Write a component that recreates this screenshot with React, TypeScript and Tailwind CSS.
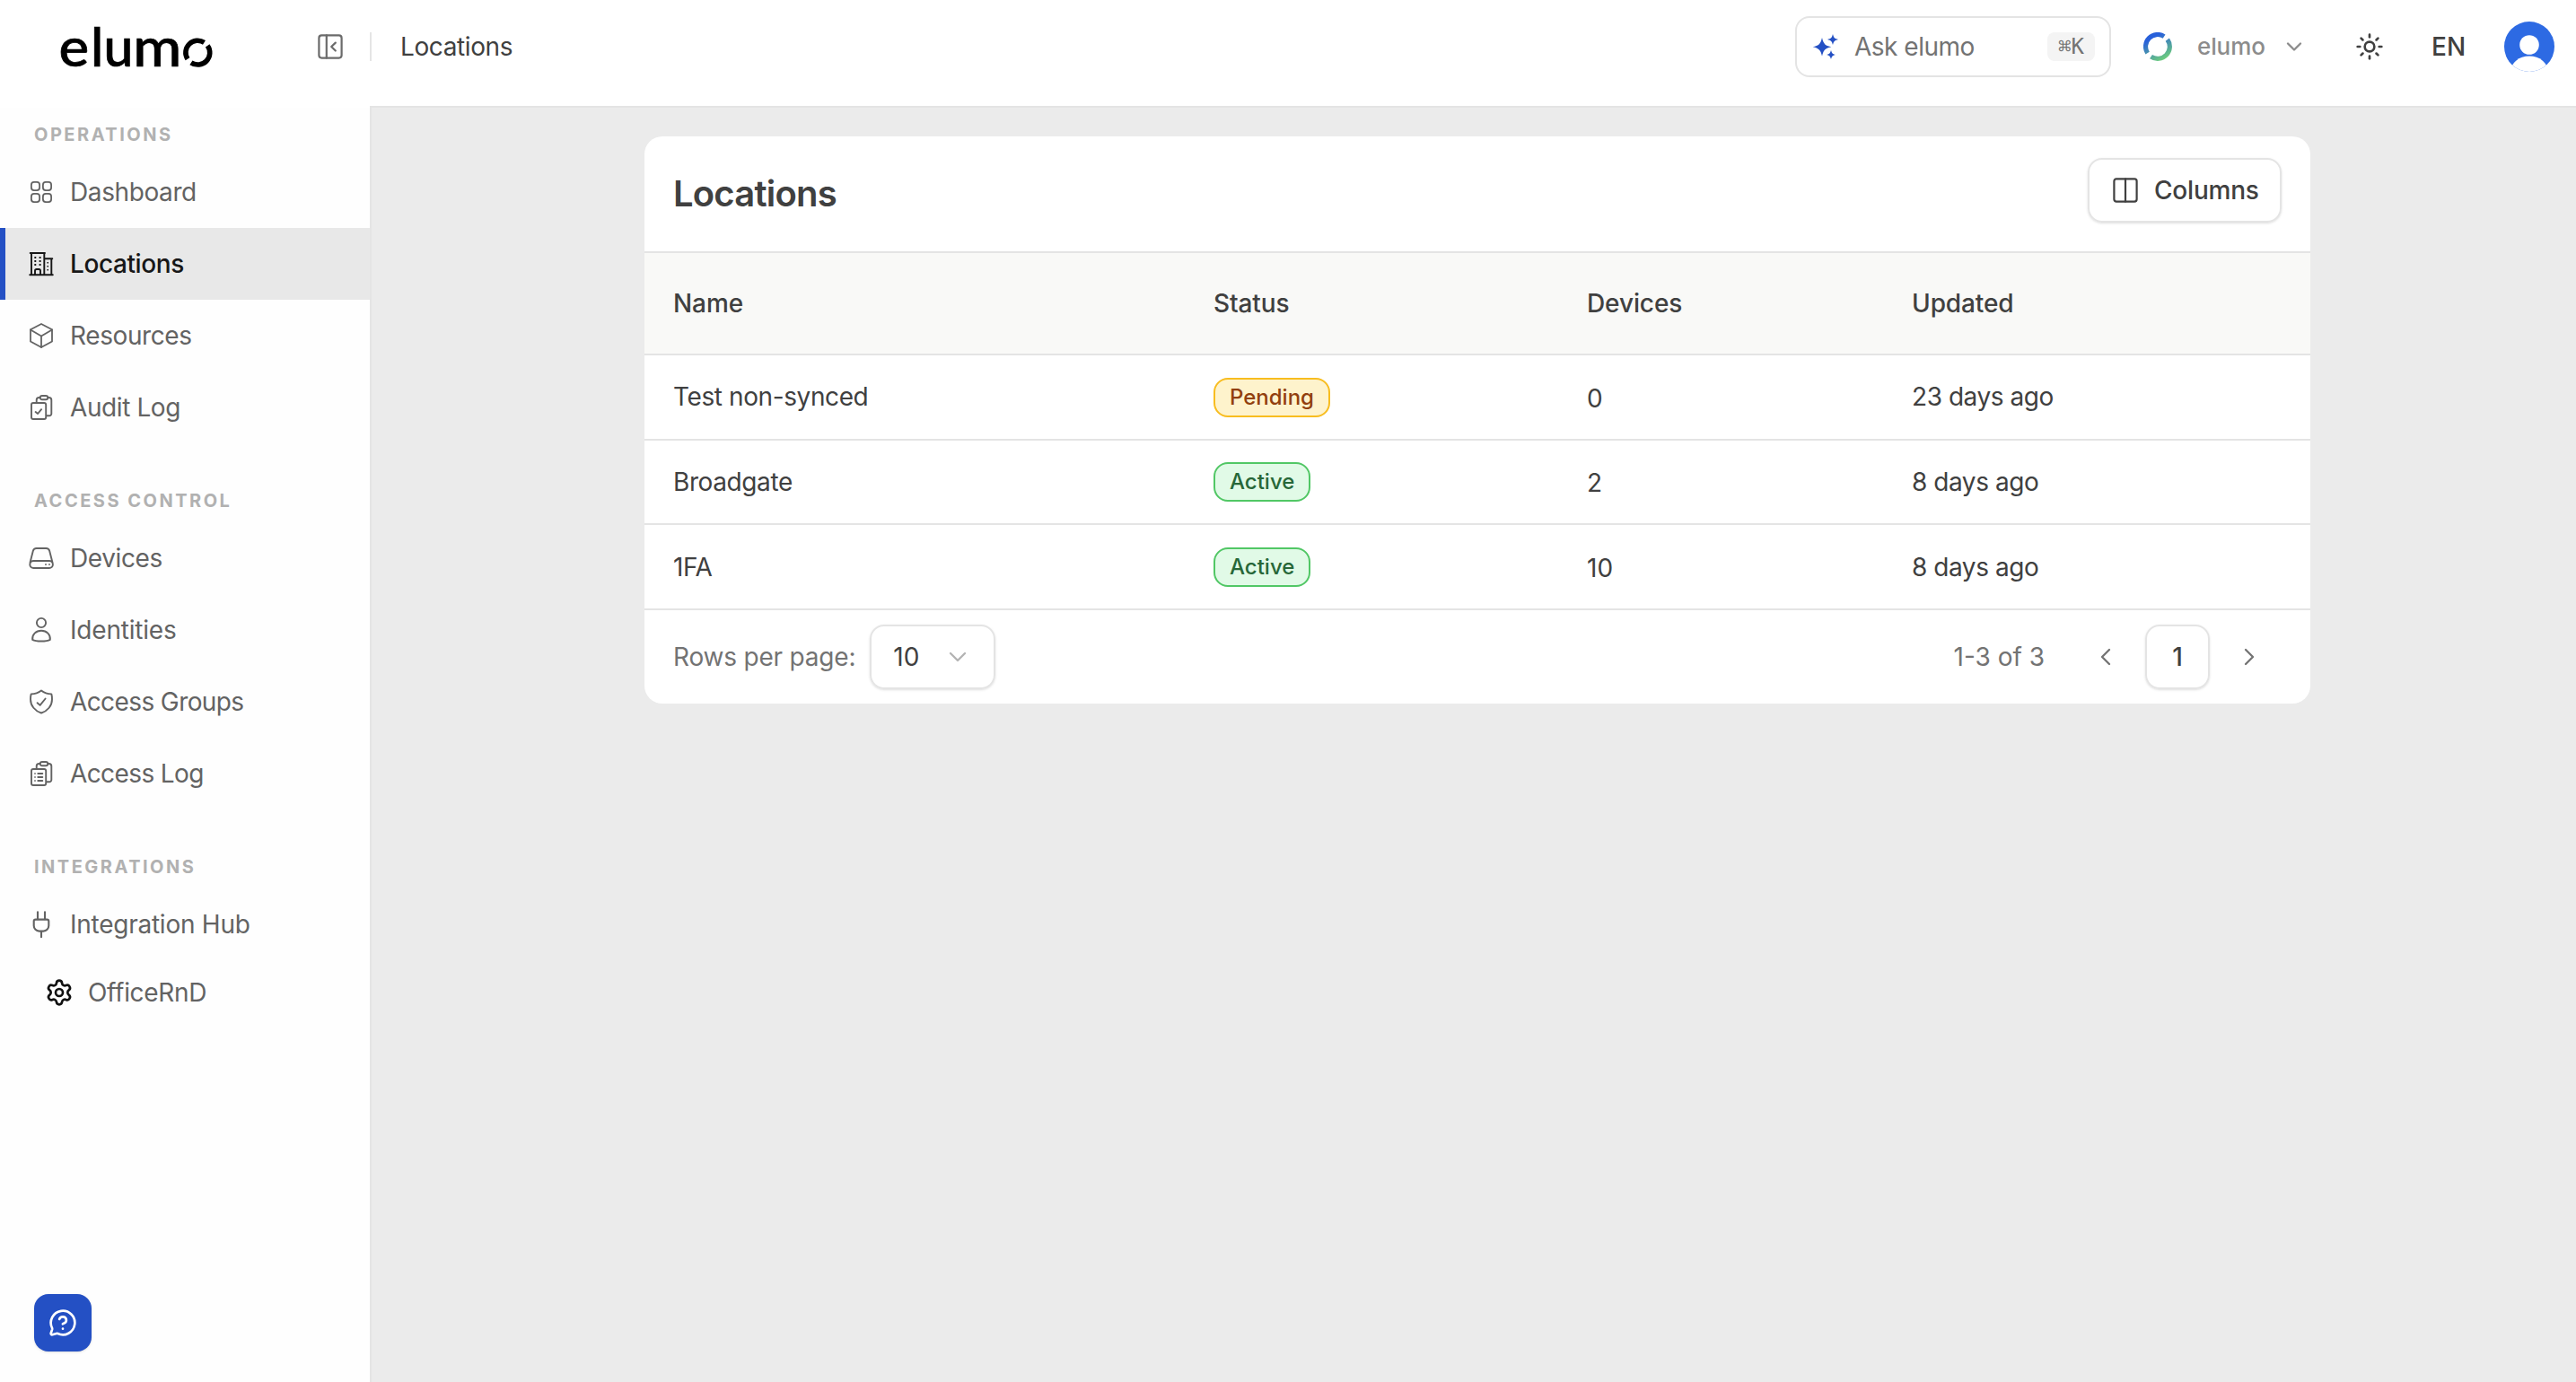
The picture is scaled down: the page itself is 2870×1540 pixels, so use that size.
import type { ReactNode } from "react";
import { ChevronDown, ChevronLeft, ChevronRight, MessageCircleQuestionMark, Settings, Sun } from "lucide-react";

type Status = "Pending" | "Active";

interface Location {
  name: string;
  status: Status;
  devices: number;
  updated: string;
}

interface NavItem {
  label: string;
  icon: ReactNode;
  active?: boolean;
  className?: string;
}

const locations: Location[] = [
  { name: "Test non-synced", status: "Pending", devices: 0, updated: "23 days ago" },
  { name: "Broadgate", status: "Active", devices: 2, updated: "8 days ago" },
  { name: "1FA", status: "Active", devices: 10, updated: "8 days ago" },
];

const statusStyles: Record<Status, string> = {
  Pending: "border-[#f8bd20] bg-[#fef3cc] text-[#92400e]",
  Active: "border-[#51c765] bg-[#e1fae7] text-[#276738]",
};

function Icon({ children, width = 2 }: { children: ReactNode; width?: number }) {
  return (
    <svg
      className="size-8 shrink-0"
      viewBox="0 0 32 32"
      fill="none"
      stroke="currentColor"
      strokeWidth={width}
      strokeLinecap="round"
      strokeLinejoin="round"
    >
      {children}
    </svg>
  );
}

const DashboardIcon = () => (
  <Icon width={1.8}>
    <rect x="4.9" y="4.9" width="9.2" height="9.2" rx="3" />
    <rect x="17.9" y="4.9" width="9.2" height="9.2" rx="3" />
    <rect x="4.9" y="17.9" width="9.2" height="9.2" rx="3" />
    <rect x="17.9" y="17.9" width="9.2" height="9.2" rx="3" />
  </Icon>
);

const BuildingIcon = () => (
  <Icon width={1.9}>
    <path d="M3.7 4H20M5 4v24M19.3 4v24M19.3 10.2h9M27.3 10.2V28M3.2 28.2h25.6" />
    <path d="M9 28v-4.2a1.8 1.8 0 0 1 1.8-1.8h2.4a1.8 1.8 0 0 1 1.8 1.8V28" />
    <path d="M9.3 9v.1M14.6 9v.1M9.3 13v.1M14.6 13v.1M9.3 17v.1M14.6 17v.1" strokeLinecap="square" />
    <path d="M23.2 14.7v.1M23.2 18.7v.1M23.2 22.7v.1" strokeWidth="1.5" strokeLinecap="square" />
  </Icon>
);

const CubeIcon = () => (
  <Icon width={1.8}>
    <path d="M16 3 28 9.3v13.2L16 29 4 22.5V9.3z" />
    <path d="m4 9.5 12 7 12-7M16 16.5V29" />
  </Icon>
);

function ClipboardIcon({ children }: { children: ReactNode }) {
  return (
    <Icon width={1.9}>
      <path d="M22 25.3h3a2.3 2.3 0 0 0 2.3-2.3V7.8A2.8 2.8 0 0 0 24.5 5h-1.3M14.8 5h-1.3a2.8 2.8 0 0 0-2.8 2.8v3" />
      <path d="M17 3h4c1.5 0 2.3 1.1 2.3 2.2S22.5 7.3 21 7.3h-4c-1.5 0-2.3-1-2.3-2.1S15.5 3 17 3z" />
      <rect x="5" y="11" width="16.2" height="18" rx="2" />
      {children}
    </Icon>
  );
}

const AuditIcon = () => (
  <ClipboardIcon>
    <path d="m9.6 21 2.5 2 4-4.8" />
  </ClipboardIcon>
);

const AccessLogIcon = () => (
  <ClipboardIcon>
    <path d="M12.3 16h5M12.3 20h5M12.3 24h5" />
    <path d="M9 16v.01M9 20v.01M9 24v.01" strokeWidth="1.6" strokeLinecap="square" />
  </ClipboardIcon>
);

const DriveIcon = () => (
  <Icon width={1.9}>
    <path d="M3.6 20.5 6.8 7.9A4 4 0 0 1 10.6 5h10.8a4 4 0 0 1 3.8 2.9l3.2 12.6" />
    <rect x="3.3" y="19" width="25.6" height="8" rx="4" />
    <path d="M21 23v.01M25 23v.01" />
  </Icon>
);

const PersonIcon = () => (
  <Icon width={1.9}>
    <circle cx="16" cy="8" r="5.1" />
    <path d="M6.2 26.8C5.6 21 10 16.8 16 16.8s10.4 4.2 9.8 10c-2 1.1-5.6 1.7-9.8 1.7s-7.8-.6-9.8-1.7z" />
  </Icon>
);

const ShieldIcon = () => (
  <Icon width={1.9}>
    <path d="M16 3.5C13 6 9 7.4 4.7 7.4 4.2 9 4 11 4 13.2 4 20.5 9 26.3 16 28.5c7-2.2 12-8 12-15.3 0-2.2-.2-4.2-.7-5.8C23 7.4 19 6 16 3.5z" />
    <path d="m11.6 17.2 3 2.7 6-7.4" />
  </Icon>
);

const PlugIcon = () => (
  <Icon width={2.1}>
    <path d="M12 2.3v8M20 2.3v8M16 24.3v6" />
    <path d="M9.7 10.6h12.6a2 2 0 0 1 2 2v5a6 6 0 0 1-6 6h-4.6a6 6 0 0 1-6-6v-5a2 2 0 0 1 2-2z" />
  </Icon>
);

const navSections: { title: string; items: NavItem[] }[] = [
  {
    title: "Operations",
    items: [
      { label: "Dashboard", icon: <DashboardIcon /> },
      { label: "Locations", icon: <BuildingIcon />, active: true },
      { label: "Resources", icon: <CubeIcon /> },
      { label: "Audit Log", icon: <AuditIcon /> },
    ],
  },
  {
    title: "Access Control",
    items: [
      { label: "Devices", icon: <DriveIcon /> },
      { label: "Identities", icon: <PersonIcon />, className: "tracking-[-0.2px]" },
      { label: "Access Groups", icon: <ShieldIcon />, className: "tracking-[-0.6px]" },
      { label: "Access Log", icon: <AccessLogIcon />, className: "tracking-[-0.6px]" },
    ],
  },
  {
    title: "Integrations",
    items: [{ label: "Integration Hub", icon: <PlugIcon />, className: "tracking-[-0.25px]" }],
  },
];

function Logo() {
  return (
    <svg className="h-20 w-[176px] overflow-visible" viewBox="0 -8 176 80" aria-label="elumo">
      <g fontFamily="Lato" fontSize="60" fontWeight="500" fill="#000" stroke="#000" strokeWidth="0.7">
        <text transform="translate(-0.6 54) scale(1.06 1)">e</text>
        <text transform="translate(35 54)">l</text>
        <text transform="translate(49.4 54) scale(0.98 1)">u</text>
        <text transform="translate(82.2 54) scale(1.09 1)">m</text>
      </g>
      <g fill="none" stroke="#000" strokeWidth="5.6">
        <path d="M143 45.8A13.4 13.4 0 0 1 161.5 27.3" />
        <path d="M165.2 30.8A13.4 13.4 0 0 1 146.9 49.8" />
      </g>
    </svg>
  );
}

function RingMark() {
  return (
    <svg className="size-8" viewBox="0 0 32 32" fill="none" stroke="url(#ring)" strokeWidth="5.2">
      <defs>
        <linearGradient id="ring" x1="8" y1="4" x2="22" y2="30" gradientUnits="userSpaceOnUse">
          <stop offset="0.1" stopColor="#2860da" />
          <stop offset="1" stopColor="#6ccb7e" />
        </linearGradient>
      </defs>
      <path d="M4.6 23.1A13.4 13.4 0 0 1 23.1 4.6" />
      <path d="M26.8 8.1A13.4 13.4 0 0 1 8.5 27.1" />
    </svg>
  );
}

function Sidebar() {
  return (
    <aside className="flex w-[414px] shrink-0 flex-col border-r-2 border-[#e4e4e4] bg-[#fefefe]">
      <nav className="flex flex-1 flex-col gap-[34px]">
        {navSections.map((section) => (
          <div key={section.title}>
            <div className="flex h-[54px] items-center pt-[6px] pl-[38px] text-xl leading-6 font-bold tracking-[2.5px] text-[#b1b1b1] uppercase">
              {section.title}
            </div>
            {section.items.map((item) => (
              <a
                key={item.label}
                className={`flex h-20 items-center gap-4 border-l-6 pl-6 ${item.className ?? "tracking-[-0.4px]"} ${
                  item.active
                    ? "border-[#2450c4] bg-[#e8e8e8] font-medium text-[#171717]"
                    : "border-transparent text-[#636363]"
                }`}
              >
                {item.icon}
                {item.label}
              </a>
            ))}
            {section.title === "Integrations" && (
              <a className="flex h-[72px] items-center gap-4 pl-[50px] tracking-[-0.3px] text-[#636363]">
                <Settings size={32} className="text-[#111]" />
                OfficeRnD
              </a>
            )}
          </div>
        ))}
      </nav>
      <button className="mb-[34px] ml-[38px] flex size-16 items-center justify-center rounded-2xl bg-[#2450c4] text-white shadow-sm">
        <MessageCircleQuestionMark size={32} />
      </button>
    </aside>
  );
}

function Header() {
  return (
    <header className="flex h-[120px] bg-white">
      <div className="flex h-[104px] w-[412px] items-center justify-between pr-7 pl-[66px] text-[#6b6b6b]">
        <Logo />
        <Icon width={2.2}>
          <rect x="3.4" y="3.4" width="25.2" height="25.2" rx="3" />
          <path d="M11.8 3.4v25.2M21.8 11.6 17.2 16l4.6 4.5" />
        </Icon>
      </div>
      <div className="flex flex-1 items-center border-b-2 border-[#e4e4e4] pb-[14px]">
        <div className="h-8 w-0.5 bg-[#e5e5e5]" />
        <span className="ml-8 tracking-[-0.4px]">Locations</span>
        <div className="ml-auto flex h-[68px] w-[352px] items-center rounded-2xl border-2 border-[#e4e4e4] px-4 text-[#737373]">
          <svg className="size-8" viewBox="0 0 32 32" fill="#2450c4">
            <path d="M12 6c1.5 6.8 3.5 8.8 10.3 10.3C15.5 17.8 13.5 19.8 12 26.6 10.5 19.8 8.5 17.8 1.7 16.3 8.5 14.8 10.5 12.8 12 6z" />
            <path d="M24 2c1 4 2 5 6 6-4 1-5 2-6 6-1-4-2-5-6-6 4-1 5-2 6-6z" />
            <path d="M22 20c.9 3.3 1.7 4.1 5 5-3.3.9-4.1 1.7-5 5-.9-3.3-1.7-4.1-5-5 3.3-.9 4.1-1.7 5-5z" />
          </svg>
          <span className="ml-4 tracking-[-0.5px]">Ask elumo</span>
          <kbd className="ml-auto flex h-8 w-[53px] items-center justify-center rounded-lg bg-[#f4f4f4] font-['DejaVu_Sans_Mono',monospace] text-2xl">
            ⌘K
          </kbd>
        </div>
        <div className="ml-9 flex items-center">
          <RingMark />
          <span className="ml-7 w-[76px] text-[26px] font-medium tracking-[-0.1px] text-[#8c8c8c]">elumo</span>
          <ChevronDown size={28} className="ml-[18px] text-[#8c8c8c]" />
        </div>
        <Sun size={32} className="ml-[54px]" />
        <span className="ml-[53px] w-10 font-medium">EN</span>
        <svg className="mr-6 ml-[41px] size-14" viewBox="0 0 56 56">
          <clipPath id="avatar">
            <circle cx="28" cy="28" r="28" />
          </clipPath>
          <g clipPath="url(#avatar)">
            <rect width="56" height="56" fill="#2d6ae3" />
            <circle cx="28" cy="26" r="10.8" fill="#fff" />
            <ellipse cx="28" cy="56" rx="21" ry="17.5" fill="#fff" />
          </g>
        </svg>
      </div>
    </header>
  );
}

const columns = "grid grid-cols-[602px_416px_362px_1fr] items-center pl-8";

function LocationsTable() {
  return (
    <section className="mx-auto mt-8 w-[1856px] overflow-hidden rounded-[20px] bg-white">
      <div className="flex h-[130px] items-start justify-between border-b-2 border-[#e4e4e4] px-8 pt-6">
        <h1 className="mt-4 text-[40px] leading-[48px] font-semibold tracking-[-0.8px]">Locations</h1>
        <button className="flex h-[72px] w-[216px] items-center gap-4 rounded-2xl border-2 border-[#e4e4e4] pl-6 font-medium tracking-[-0.2px] shadow-sm">
          <Icon width={2.2}>
            <rect x="3.4" y="3.4" width="25.2" height="25.2" rx="2.5" />
            <path d="M16 3.4v25.2" />
          </Icon>
          Columns
        </button>
      </div>

      <div className={`${columns} h-[114px] border-b-2 border-[#e4e4e4] bg-[#f9f9f7] font-medium tracking-[-0.1px]`}>
        <span>Name</span>
        <span>Status</span>
        <span>Devices</span>
        <span>Updated</span>
      </div>

      {locations.map((location) => (
        <div key={location.name} className={`${columns} h-[94.67px] border-b-2 border-[#e4e4e4]`}>
          <span className="tracking-[-0.4px]">{location.name}</span>
          <span
            className={`mt-px flex h-11 items-center justify-self-start rounded-2xl border-2 px-4 text-2xl font-medium ${statusStyles[location.status]}`}
          >
            {location.status}
          </span>
          <span className="pt-[3px]">{location.devices}</span>
          <span className="tracking-[-0.45px]">{location.updated}</span>
        </div>
      ))}

      <div className="flex h-[104px] items-center px-8 text-[#737373]">
        <span className="tracking-[-0.2px]">Rows per page:</span>
        <button className="ml-4 flex h-[72px] w-[140px] items-center justify-between rounded-2xl border-2 border-[#e4e4e4] px-6 text-[#404040] shadow-sm">
          10
          <ChevronDown size={32} strokeWidth={1.75} className="text-[#b3b3b3]" />
        </button>
        <span className="mr-8 ml-auto">1-3 of 3</span>
        <div className="flex gap-2">
          <button className="flex size-[72px] items-center justify-center">
            <ChevronLeft size={32} strokeWidth={1.75} />
          </button>
          <button className="flex size-[72px] items-center justify-center rounded-2xl border-2 border-[#e4e4e4] font-medium text-[#404040] shadow-sm">
            1
          </button>
          <button className="flex size-[72px] items-center justify-center">
            <ChevronRight size={32} strokeWidth={1.75} />
          </button>
        </div>
      </div>
    </section>
  );
}

export default function App() {
  return (
    <div className="flex h-screen flex-col overflow-hidden bg-[#ebebeb] font-[Inter,sans-serif] text-[28px] leading-10 text-[#404040]">
      <Header />
      <div className="flex flex-1">
        <Sidebar />
        <main className="flex-1 pl-2">
          <LocationsTable />
        </main>
      </div>
    </div>
  );
}
